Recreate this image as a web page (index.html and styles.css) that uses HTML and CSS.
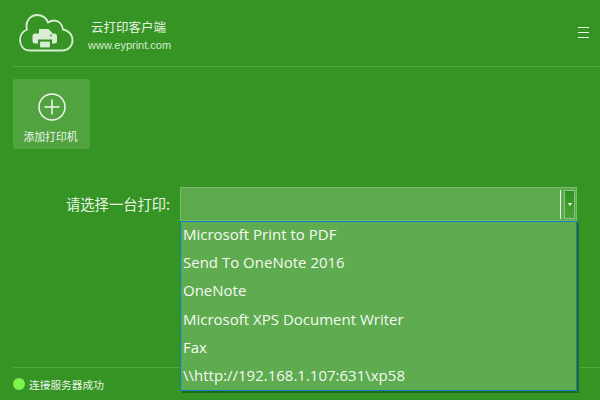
FILE: index.html
```html
<!DOCTYPE html>
<html lang="zh">
<head>
<meta charset="utf-8">
<title>云打印客户端</title>
<link rel="stylesheet" href="styles.css">
</head>
<body>
<div class="app">
  <header class="header">
    <svg class="logo" width="55" height="38" viewBox="0 0 55 38" aria-hidden="true">
      <path class="cloud" d="M10 36.500 H43 C49 36.500 53.500 32 53.500 26.500 C53.500 20.500 49 16 44 15.500 C43.500 10 39.500 6.500 35 6.500 C33 6.500 31 7.300 29 8.500 C27 3.500 22.500 1 18 1 C12 1 7.500 6 7.500 12 C7.500 13 7.600 14.500 8 15.500 C3.500 17.500 1 21.500 1 26 C1 32 5 36.500 10 36.500 Z"/>
      <path class="printer" d="M20 15 H29.500 L33 18.500 V19.500 H35.500 A2.500 2.500 0 0 1 38 22 V27 A2.500 2.500 0 0 1 35.500 29.500 H33 V25.500 H19 V29.500 H16 A2.500 2.500 0 0 1 13.500 27 V22 A2.500 2.500 0 0 1 16 19.500 H20 Z"/>
      <rect class="paper" x="20.500" y="27" width="11" height="7"/>
      <circle class="led" cx="32" cy="21.500" r="0.900"/>
    </svg>
    <div class="brand">
      <div class="brand-name">云打印客户端</div>
      <div class="brand-url">www.eyprint.com</div>
    </div>
    <div class="menu-icon" aria-label="菜单"><i></i><i></i><i></i></div>
  </header>
  <main class="main">
    <button class="add-btn" type="button">
      <svg width="28" height="28" viewBox="0 0 28 28" aria-hidden="true">
        <circle class="ring" cx="14" cy="14" r="13"/>
        <path class="ring" d="M14 6.500 V21.500 M6.500 14 H21.500"/>
      </svg>
      <span>添加打印机</span>
    </button>
    <div class="picker">
      <label class="picker-label">请选择一台打印:</label>
      <div class="select">
        <div class="select-box">
          <span class="select-sep"></span>
          <span class="select-arrow"><b></b></span>
        </div>
        <ul class="options">
          <li>Microsoft Print to PDF</li>
          <li>Send To OneNote 2016</li>
          <li>OneNote</li>
          <li>Microsoft XPS Document Writer</li>
          <li>Fax</li>
          <li>\\http://192.168.1.107:631\xp58</li>
        </ul>
      </div>
    </div>
  </main>
  <footer class="status">
    <span class="dot"></span>
    <span>连接服务器成功</span>
  </footer>
</div>
</body>
</html>
```
FILE: styles.css
```css
* { box-sizing: border-box; }
html, body { margin: 0; padding: 0; }
body {
  width: 600px;
  height: 400px;
  overflow: hidden;
  background: #359423;
  font-family: "Noto Sans CJK SC", "Open Sans", sans-serif;
  color: #e9f4e6;
}
.app {
  height: 400px;
  display: flex;
  flex-direction: column;
}
.header {
  height: 67px;
  margin-left: 13px;
  border-bottom: 1px solid #53a443;
  display: flex;
  align-items: flex-start;
}
.logo { margin: 14px 0 0 6px; flex: none; }
.cloud { fill: none; stroke: #d9ecd5; stroke-width: 1.800; }
.printer { fill: #d9ecd5; }
.paper { fill: #d9ecd5; stroke: #359423; stroke-width: 1.200; }
.led { fill: #359423; }
.brand { margin: 17px 0 0 14px; }
.brand-name { font-size: 12.500px; line-height: 20px; margin-left: 3px; }
.brand-url { font-family: "Liberation Sans", sans-serif; font-size: 11px; line-height: 14px; margin-top: 1px; color: #d6ebd1; }
.menu-icon {
  margin-left: auto;
  margin-top: 27px;
  margin-right: 11px;
  width: 11px;
  display: flex;
  flex-direction: column;
  gap: 4px;
}
.menu-icon i { display: block; height: 1px; background: #f2f9f0; }
.main {
  flex: 1;
  padding: 12px 0 0 13px;
  display: flex;
  flex-direction: column;
}
.add-btn {
  width: 77px;
  height: 70px;
  padding: 14px 0 0;
  border: 0;
  border-radius: 2px;
  background: #50a33f;
  color: #eef7ec;
  font: inherit;
  font-size: 10.800px;
  display: flex;
  flex-direction: column;
  align-items: center;
}
.add-btn span { line-height: 16px; margin: 7px 2px 0 0; }
.ring { fill: none; stroke: #eef7ec; stroke-width: 1.500; }
.picker {
  margin-top: 38px;
  display: flex;
  align-items: flex-start;
}
.picker-label {
  width: 160px;
  padding-left: 53px;
  font-size: 14.300px;
  line-height: 34px;
  white-space: nowrap;
}
.select { width: 397px; position: relative; margin-left: 7px; }
.select-box {
  height: 34px;
  background: #5daa4d;
  border: 1px solid #7dbb70;
  display: flex;
  justify-content: flex-end;
  align-items: center;
  padding-right: 1px;
}
.select-sep { width: 1px; height: 29px; background: #f0f8ee; margin-right: 3px; }
.select-arrow {
  width: 11px;
  height: 29px;
  background: linear-gradient(#2f8f1e, #4aa537);
  border: 1px solid #8ec584;
  display: flex;
  align-items: center;
  justify-content: center;
}
.select-arrow b {
  width: 0;
  height: 0;
  border: 2.500px solid transparent;
  border-top: 3px solid #fff;
  border-bottom: 0;
}
.options {
  position: absolute;
  top: 34px;
  left: 0;
  width: 397px;
  height: 170px;
  margin: 0;
  padding: 0;
  list-style: none;
  background: #5fab4f;
  border: 1px solid #0a7fc0;
  box-shadow: 2px 2px 0 #256a18;
  font-family: "Open Sans", sans-serif;
  font-size: 15px;
  color: #f4faf2;
}
.options li { height: 28.200px; line-height: 25px; padding-left: 2px; white-space: nowrap; }
.status {
  height: 33px;
  margin-left: 13px;
  border-top: 1px solid #53a443;
  display: flex;
  align-items: center;
  gap: 4px;
  font-size: 10.700px;
}
.dot { width: 12px; height: 12px; border-radius: 50%; background: #7cf24c; }
```
